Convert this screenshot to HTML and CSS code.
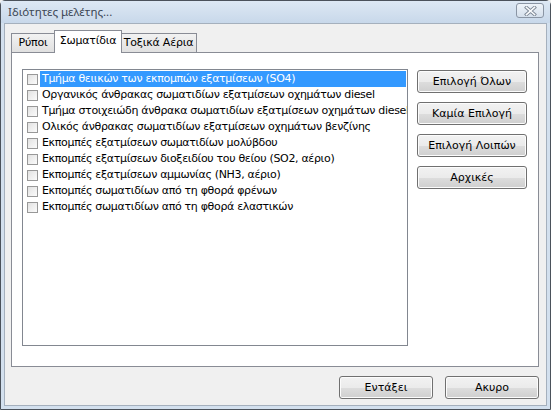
FILE: index.html
```html
<!DOCTYPE html>
<html lang="el">
<head>
    <meta charset="UTF-8">
    <title>Ιδιότητες μελέτης...</title>
    <link rel="stylesheet" href="styles.css">
</head>
<body>
    <div class="window">
        <div class="titlebar">
            <span class="title">Ιδιότητες μελέτης...</span>
            <button class="close-btn" aria-label="Κλείσιμο">
                <svg width="17" height="10" viewBox="0 0 17 10">
                    <path d="M4.5 1.5 L12.5 8.5 M12.5 1.5 L4.5 8.5" stroke="#7d8896" stroke-width="3.4" stroke-linecap="square"/>
                    <path d="M4.5 1.5 L12.5 8.5 M12.5 1.5 L4.5 8.5" stroke="#fbfcfd" stroke-width="1.6" stroke-linecap="square"/>
                </svg>
            </button>
        </div>

        <div class="client">
            <div class="tabs">
                <div class="tab tab-rypoi">Ρύποι</div>
                <div class="tab active">Σωματίδια</div>
                <div class="tab tab-toxic">Τοξικά Αέρια</div>
            </div>

            <div class="panel">
                <ul class="checklist">
                    <li class="selected"><span class="box"></span><span class="label">Τμήμα θειικών των εκπομπών εξατμίσεων (SO4)</span></li>
                    <li><span class="box"></span><span class="label">Οργανικός άνθρακας σωματιδίων εξατμίσεων οχημάτων diesel</span></li>
                    <li><span class="box"></span><span class="label">Τμήμα στοιχειώδη άνθρακα σωματιδίων εξατμίσεων οχημάτων diesel</span></li>
                    <li><span class="box"></span><span class="label">Ολικός άνθρακας σωματιδίων εξατμίσεων οχημάτων βενζίνης</span></li>
                    <li><span class="box"></span><span class="label">Εκπομπές εξατμίσεων σωματιδίων μολύβδου</span></li>
                    <li><span class="box"></span><span class="label">Εκπομπές εξατμίσεων διοξειδίου του θείου (SO2, αέριο)</span></li>
                    <li><span class="box"></span><span class="label">Εκπομπές εξατμίσεων αμμωνίας (NH3, αέριο)</span></li>
                    <li><span class="box"></span><span class="label">Εκπομπές σωματιδίων από τη φθορά φρένων</span></li>
                    <li><span class="box"></span><span class="label">Εκπομπές σωματιδίων από τη φθορά ελαστικών</span></li>
                </ul>

                <div class="side-buttons">
                    <button class="btn">Επιλογή Όλων</button>
                    <button class="btn">Καμία Επιλογή</button>
                    <button class="btn">Επιλογή Λοιπών</button>
                    <button class="btn">Αρχικές</button>
                </div>
            </div>

            <div class="footer">
                <button class="btn btn-wide">Εντάξει</button>
                <button class="btn btn-wide">Ακυρο</button>
            </div>
        </div>
    </div>
</body>
</html>
```

FILE: styles.css
```css
html, body {
    margin: 0;
    padding: 0;
}
body {
    width: 551px;
    height: 410px;
    overflow: hidden;
    background: #f0f0f0;
    font-family: "DejaVu Sans", Tahoma, sans-serif;
    font-size: 11px;
    color: #000;
}
.window {
    box-sizing: border-box;
    width: 551px;
    height: 410px;
    border: 1px solid #4b525b;
    border-radius: 5px 5px 0 0;
    background: #d3e0ee;
    padding: 0 3px 3px 3px;
    display: flex;
    flex-direction: column;
}
.titlebar {
    height: 22px;
    display: flex;
    align-items: center;
    justify-content: space-between;
    background: linear-gradient(#dde8f4, #c8d8ea);
    margin: 0 -3px;
    padding-left: 7px;
    padding-right: 6px;
}
.title {
    font-family: "Noto Sans", "DejaVu Sans", sans-serif;
    font-size: 11.5px;
    color: #3b4654;
    margin-top: -1px;
}
.close-btn {
    width: 28px;
    height: 15px;
    padding: 0;
    margin-top: -3px;
    border: 1px solid #8a95a4;
    border-radius: 3px;
    background: linear-gradient(#eef3f9, #d5e0ec);
    display: flex;
    align-items: center;
    justify-content: center;
}
.client {
    flex: 1;
    background: #f0f0f0;
    border: 1px solid #a5b0bd;
    padding: 6px 7px 0 6px;
    display: flex;
    flex-direction: column;
}

/* tab strip */
.tabs {
    display: flex;
    align-items: flex-end;
    height: 22px;
    position: relative;
    z-index: 1;
    letter-spacing: -0.2px;
}
.tab {
    box-sizing: border-box;
    height: 19px;
    line-height: 17px;
    text-align: center;
    border: 1px solid #898c95;
    border-bottom: none;
    border-left: none;
    background: linear-gradient(#f2f2f2, #e0e0e0);
}
.tab-rypoi {
    width: 44px;
    border-left: 1px solid #898c95;
}
.tab-toxic {
    width: 76px;
}
.tab.active {
    width: 68px;
    height: 23px;
    margin-bottom: -1px;
    margin-left: -1px;
    margin-right: -1px;
    position: relative;
    border-left: 1px solid #898c95;
    background: #fff;
    line-height: 19px;
}

/* tab page */
.panel {
    box-sizing: border-box;
    width: 528px;
    height: 315px;
    background: #fff;
    border: 1px solid #898c95;
    display: flex;
    align-items: flex-start;
    padding: 16px 0 0 10px;
    gap: 9px;
}
.checklist {
    box-sizing: border-box;
    width: 386px;
    height: 277px;
    margin: 0;
    padding: 1px;
    list-style: none;
    border: 1px solid #828790;
    overflow: hidden;
}
.checklist li {
    height: 16px;
    display: flex;
    align-items: center;
    white-space: nowrap;
    padding-left: 3px;
}
.box {
    flex: none;
    box-sizing: border-box;
    width: 11px;
    height: 11px;
    border: 1px solid #989898;
    background: linear-gradient(135deg, #e2e2e2, #fbfbfb);
    margin-right: 2px;
}
.label {
    padding: 0 2px;
    line-height: 16px;
    letter-spacing: -0.33px;
}
.selected .label {
    flex: 1;
    background: #3399ff;
    color: #fff;
}

/* buttons */
.side-buttons {
    display: flex;
    flex-direction: column;
    gap: 9px;
    padding-top: 1px;
}
.btn {
    box-sizing: border-box;
    width: 110px;
    height: 23px;
    padding: 0;
    font-family: inherit;
    font-size: 11px;
    color: #000;
    border: 1px solid #707070;
    border-radius: 3px;
    background: linear-gradient(#f2f2f2 0%, #ebebeb 50%, #dddddd 51%, #cfcfcf 100%);
    box-shadow: inset 0 0 0 1px #fcfcfc;
}
.footer {
    display: flex;
    justify-content: flex-end;
    gap: 12px;
    padding-top: 9px;
    width: 528px;
}
.btn-wide {
    width: 94px;
}
```
